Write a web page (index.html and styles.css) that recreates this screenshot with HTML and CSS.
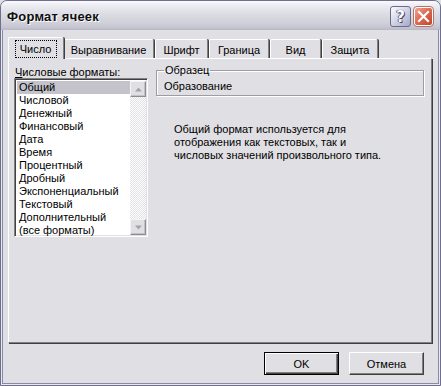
FILE: index.html
```html
<!DOCTYPE html>
<html lang="ru">
<head>
    <meta charset="UTF-8">
    <title>Формат ячеек</title>
    <link rel="stylesheet" href="styles.css">
</head>
<body>
    <div class="window">
        <div class="titlebar">
            <span class="title">Формат ячеек</span>
            <div class="caption-btns">
                <div class="cap help">?</div>
                <div class="cap close">
                    <svg width="13" height="13" viewBox="0 0 13 13"><path d="M2 2L11 11M11 2L2 11" stroke="#fff" stroke-width="2.2" stroke-linecap="square"/></svg>
                </div>
            </div>
        </div>
        <div class="client">
            <div class="tabs">
                <div class="tab active w-num"><span class="focus">Число</span></div>
                <div class="tab w-align">Выравнивание</div>
                <div class="tab w-font">Шрифт</div>
                <div class="tab w-border">Граница</div>
                <div class="tab w-view">Вид</div>
                <div class="tab w-prot">Защита</div>
            </div>
            <div class="panel">
                <div class="left">
                    <div class="label"><u>Ч</u>исловые форматы:</div>
                    <div class="listbox">
                        <ul class="items">
                            <li class="selected">Общий</li>
                            <li>Числовой</li>
                            <li>Денежный</li>
                            <li>Финансовый</li>
                            <li>Дата</li>
                            <li>Время</li>
                            <li>Процентный</li>
                            <li>Дробный</li>
                            <li>Экспоненциальный</li>
                            <li>Текстовый</li>
                            <li>Дополнительный</li>
                            <li>(все форматы)</li>
                        </ul>
                        <div class="scrollbar">
                            <div class="sb-btn">
                                <svg width="7" height="5" viewBox="0 0 7 5"><path d="M3.5 0.5L7 4.5H0Z" fill="#a4a3ab"/></svg>
                            </div>
                            <div class="sb-track"></div>
                            <div class="sb-btn">
                                <svg width="7" height="5" viewBox="0 0 7 5"><path d="M0 0.5H7L3.5 4.5Z" fill="#a4a3ab"/></svg>
                            </div>
                        </div>
                    </div>
                </div>
                <div class="right">
                    <fieldset class="sample">
                        <legend>Образец</legend>
                        <div class="sample-text">Образование</div>
                    </fieldset>
                    <p class="desc">Общий формат используется для<br>отображения как текстовых, так и<br>числовых значений произвольного типа.</p>
                </div>
            </div>
            <div class="buttons">
                <div class="btn default">OK</div>
                <div class="btn">Отмена</div>
            </div>
        </div>
    </div>
</body>
</html>
```

FILE: styles.css
```css
:root {
    --face: #e0dfe3;
    --shadow: #9d9da1;
    --dark: #404040;
    --frame-dark: #6f6e8e;
    --frame-mid: #8a89a6;
    --frame-light: #e8e8ef;
}
body {
    margin: 0;
    background: var(--face);
    font-family: "Liberation Sans", Arial, sans-serif;
    font-size: 11px;
    color: #000;
}
.window {
    width: 441px;
    height: 386px;
    box-sizing: border-box;
    border: 1px solid var(--frame-dark);
    border-radius: 7px 7px 0 0;
    background: var(--frame-light);
    padding: 0 1px 1px 1px;
    display: flex;
    flex-direction: column;
    overflow: hidden;
}
.titlebar {
    height: 29px;
    margin: 0 -1px;
    display: flex;
    align-items: center;
    justify-content: space-between;
    padding: 0 6px 0 6px;
    background: linear-gradient(#fbfbfd 0%, #ececf2 15%, #dcdce4 45%, #d0d0da 75%, #c6c6d2 90%, #b9b9c6 100%);
    border-radius: 6px 6px 0 0;
}
.title {
    font-weight: bold;
    font-size: 13px;
    color: #101010;
    text-shadow: 1px 1px 0 #fff;
    margin-top: 1px;
    letter-spacing: 0.2px;
}
.caption-btns {
    display: flex;
    gap: 2px;
    margin-top: 2px;
}
.cap {
    width: 21px;
    height: 21px;
    box-sizing: border-box;
    border-radius: 3px;
    display: flex;
    align-items: center;
    justify-content: center;
}
.help {
    border: 1px solid #6a6b8e;
    background: linear-gradient(135deg, #fdfdff 0%, #d6d7e8 45%, #a6a8c6 100%);
    color: #fff;
    font: bold 15px "DejaVu Sans", sans-serif;
    text-shadow: 0 0 1px #3f4068, 1px 1px 0 #4a4b70, -1px 0 0 #6d6f93;
}
.close {
    border: 1px solid #fff;
    outline: 1px solid #b8706a;
    background: linear-gradient(135deg, #f1a595 0%, #de6b54 45%, #c4432c 100%);
    width: 19px;
    height: 19px;
    margin: 1px;
}
.client {
    flex: 1;
    border: 1px solid var(--frame-mid);
    border-top: none;
    background: var(--face);
    padding: 7px 6px 0 5px;
    display: flex;
    flex-direction: column;
}
.tabs {
    display: flex;
    align-items: flex-end;
    height: 21px;
    padding-left: 2px;
    position: relative;
    z-index: 1;
}
.tab {
    height: 19px;
    box-sizing: border-box;
    border-top: 1px solid #fff;
    border-left: 1px solid #fff;
    border-right: 1px solid #808080;
    border-radius: 2px 2px 0 0;
    box-shadow: 1px 0 0 var(--dark);
    background: var(--face);
    display: flex;
    align-items: center;
    justify-content: center;
    padding-top: 1px;
}
.w-num { width: 53px; }
.w-align { width: 91px; margin-left: 1px; }
.w-font { width: 53px; margin-left: 1px; }
.w-border { width: 60px; margin-left: 1px; }
.w-view { width: 51px; margin-left: 1px; }
.w-prot { width: 56px; margin-left: 1px; }
.tab.active {
    width: 56px;
    height: 22px;
    margin: 0 -2px -1px -2px;
    position: relative;
    z-index: 2;
    padding-top: 0;
}
.focus {
    outline: 1px dotted #000;
    padding: 2px 5px 2px 4px;
}
.panel {
    height: 285px;
    box-sizing: border-box;
    border-top: 1px solid #fff;
    border-left: 1px solid #fff;
    border-right: 1px solid #808080;
    border-bottom: 1px solid #808080;
    box-shadow: 1px 1px 0 var(--dark);
    display: flex;
    gap: 8px;
    padding: 7px 7px 0 5px;
}
.left {
    width: 134px;
}
.label {
    height: 13px;
    line-height: 13px;
    margin-bottom: -1px;
    padding-left: 1px;
}
.listbox {
    width: 134px;
    height: 159px;
    box-sizing: border-box;
    border-top: 1px solid #808080;
    border-left: 1px solid #808080;
    border-right: 1px solid #fff;
    border-bottom: 1px solid #fff;
    box-shadow: inset 1px 1px 0 var(--dark), inset -1px -1px 0 var(--face);
    background: #fff;
    display: flex;
    padding: 2px 1px 1px 2px;
}
.items {
    list-style: none;
    margin: 0;
    padding: 0;
    flex: 1;
}
.items li {
    height: 13px;
    line-height: 13px;
    padding-left: 2px;
    white-space: nowrap;
}
.items li.selected {
    background: #c4c3cb;
}
.scrollbar {
    width: 16px;
    display: flex;
    flex-direction: column;
}
.sb-btn {
    height: 16px;
    box-sizing: border-box;
    background: var(--face);
    border-top: 1px solid #f4f4f6;
    border-left: 1px solid #f4f4f6;
    border-right: 1px solid #8d8c94;
    border-bottom: 1px solid #8d8c94;
    box-shadow: inset -1px -1px 0 #c2c1c8;
    display: flex;
    align-items: center;
    justify-content: center;
}
.sb-track {
    flex: 1;
    background: repeating-conic-gradient(#fdfdfd 0 25%, #e2e1e5 0 50%) 0 0 / 2px 2px;
}
.right {
    width: 268px;
    margin-top: -2px;
}
.sample {
    margin: 0;
    padding: 3px 0 4px 7px;
    height: 32px;
    box-sizing: border-box;
    border: 1px solid var(--shadow);
    box-shadow: 1px 1px 0 #fff, inset 1px 1px 0 #fff;
}
.sample legend {
    padding: 0 1px;
    margin-left: 0;
    line-height: 13px;
}
.sample-text {
    line-height: 13px;
}
.desc {
    margin: 27px 0 0 18px;
    line-height: 13px;
}
.buttons {
    display: flex;
    justify-content: flex-end;
    gap: 10px;
    margin-top: 9px;
    padding-right: 8px;
}
.btn {
    width: 75px;
    height: 23px;
    box-sizing: border-box;
    border-top: 1px solid #fff;
    border-left: 1px solid #fff;
    border-right: 1px solid var(--dark);
    border-bottom: 1px solid var(--dark);
    box-shadow: inset -1px -1px 0 #808080;
    background: var(--face);
    display: flex;
    align-items: center;
    justify-content: center;
}
.btn.default {
    border: 1px solid #000;
    box-shadow: inset 1px 1px 0 #fff, inset -1px -1px 0 #404040, inset -2px -2px 0 #808080;
}
```
